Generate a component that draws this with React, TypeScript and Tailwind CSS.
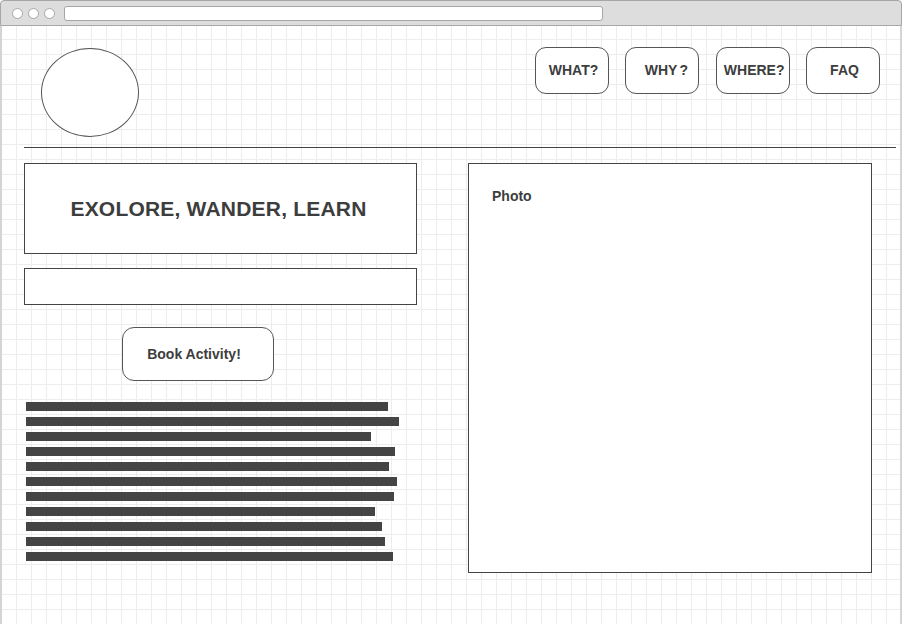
const navItems = ['WHAT?', 'WHY?', 'WHERE?', 'FAQ'];

// widths of the placeholder text lines
const lines = [362, 373, 345, 369, 363, 371, 368, 349, 356, 359, 367];

export default function App() {
  return (
    <div className="w-[902px] h-[624px] bg-white flex flex-col font-['Liberation_Sans',Arial,sans-serif] text-[#3d3d3d] overflow-hidden">
      {/* Browser chrome */}
      <div className="h-[26px] bg-[#dddddd] border border-[#a6a6a6] rounded-t-[4px] flex items-center pl-[11px] pr-[298px] shrink-0">
        <div className="flex gap-[5px]">
          <span className="w-[11px] h-[11px] rounded-full bg-white border border-[#a6a6a6]" />
          <span className="w-[11px] h-[11px] rounded-full bg-white border border-[#a6a6a6]" />
          <span className="w-[11px] h-[11px] rounded-full bg-white border border-[#a6a6a6]" />
        </div>
        <div className="ml-[9px] flex-1 h-[15px] bg-white border border-[#a6a6a6] rounded-[3px]" />
      </div>

      {/* Page */}
      <div className="flex-1 border-x-2 border-[#d4d4d4] bg-white bg-[linear-gradient(to_right,#ededed_1px,transparent_1px),linear-gradient(to_bottom,#ededed_1px,transparent_1px)] bg-[size:15px_15px] bg-[position:14px_13px] pl-[22px] pr-[4px]">
        <header className="flex items-start h-[121px]">
          <div className="ml-[17px] mt-[22px] w-[98px] h-[89px] rounded-[50%] border border-[#555] bg-white" />
          <nav className="ml-auto mr-[16px] mt-[21px] flex gap-[16.33px]">
            {navItems.map((item) => (
              <div
                key={item}
                className="w-[74px] h-[47px] rounded-[11px] border border-[#555] bg-white flex items-center justify-center pl-[3px] text-[14px] font-bold"
              >
                {item === 'WHY?' ? (
                  <span className="pl-[5px]">
                    WHY<span className="ml-[2px]">?</span>
                  </span>
                ) : (
                  item
                )}
              </div>
            ))}
          </nav>
        </header>

        <div className="h-px bg-[#444]" />

        <main className="flex mt-[15px]">
          <div className="w-[393px] flex flex-col">
            <div className="h-[91px] border border-[#444] bg-white flex items-center justify-center pr-[4px] text-[21px] tracking-[0.2px] font-bold">
              EXOLORE, WANDER, LEARN
            </div>
            <div className="mt-[14px] h-[37px] border border-[#444] bg-white" />
            <div className="mt-[22px] ml-[98px] w-[152px] h-[54px] rounded-[12px] border border-[#555] bg-white flex items-center justify-center pr-[8px] text-[14px] font-bold">
              Book Activity!
            </div>
            <div className="mt-[21px] ml-[2px] flex flex-col gap-[6px]">
              {lines.map((w, i) => (
                <div key={i} className="h-[9px] bg-[#444]" style={{ width: w }} />
              ))}
            </div>
          </div>

          <div className="ml-[51px] w-[404px] h-[410px] border border-[#444] bg-white pl-[23px] pt-[22px] text-[14px] font-bold">
            Photo
          </div>
        </main>
      </div>
    </div>
  );
}
